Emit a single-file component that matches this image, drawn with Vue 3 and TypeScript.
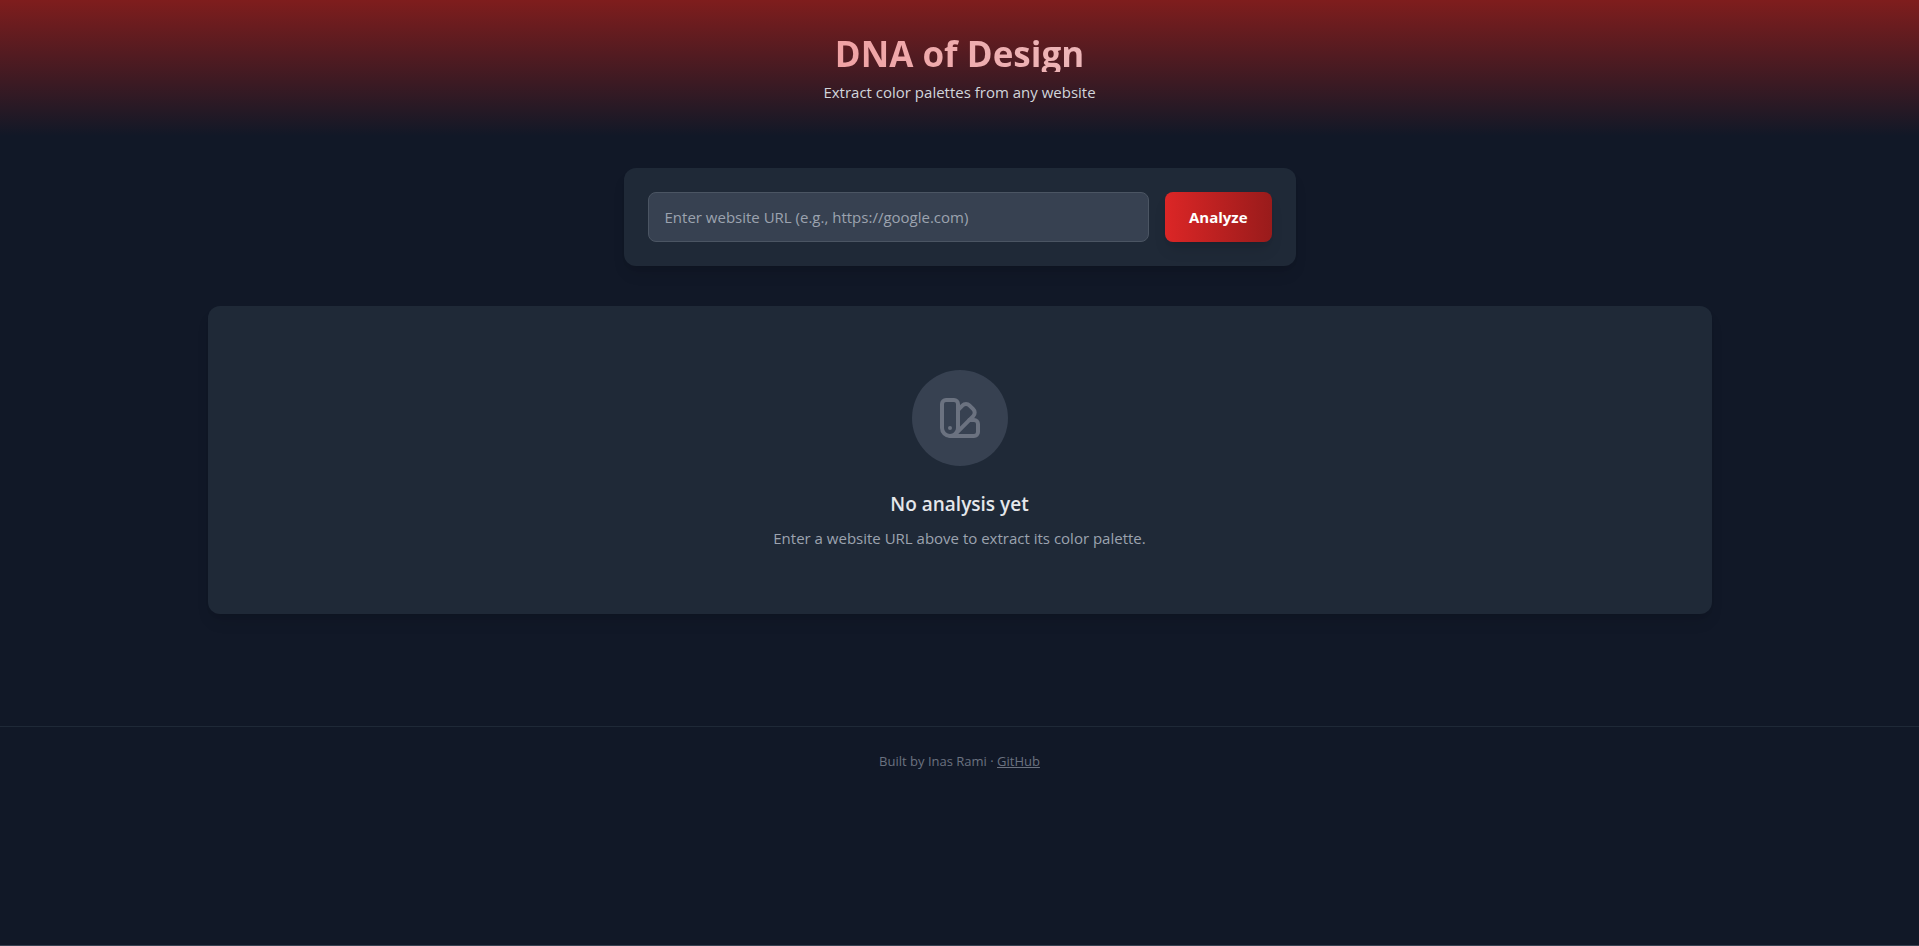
<script setup lang="ts">
import { ref } from 'vue'

const url = ref('')
</script>

<template>
  <div class="page">
    <header class="hero">
      <div class="container">
        <h1>DNA of Design</h1>
        <p>Extract color palettes from any website</p>
      </div>
    </header>

    <main class="container content">
      <form class="card search" @submit.prevent>
        <input v-model="url" type="text" aria-label="Website URL" placeholder="Enter website URL (e.g., https://google.com)" />
        <button type="submit">Analyze</button>
      </form>

      <section class="card empty">
        <div class="badge">
          <svg viewBox="0 0 24 24" aria-hidden="true">
            <path d="M11 17a4 4 0 0 1-8 0V5a2 2 0 0 1 2-2h4a2 2 0 0 1 2 2Z" />
            <path d="M16.7 13H19a2 2 0 0 1 2 2v4a2 2 0 0 1-2 2H7" />
            <path d="M7 17h.01" />
            <path d="m11 8 2.3-2.3a2.4 2.4 0 0 1 3.404.004L18.6 7.6a2.4 2.4 0 0 1 .026 3.434L9.9 19.8" />
          </svg>
        </div>
        <h2>No analysis yet</h2>
        <p>Enter a website URL above to extract its color palette.</p>
      </section>
    </main>

    <footer>Built by Inas Rami · <a href="#">GitHub</a></footer>
  </div>
</template>

<style>
body {
  margin: 0;
  background: #111827;
}
</style>

<style scoped>
* {
  box-sizing: border-box;
}
.page {
  min-height: 100vh;
  background: #111827;
  border-bottom: 1px solid #374151;
  color: #f3f4f6;
  font-family: "Segoe UI", "Open Sans", "Noto Sans", sans-serif;
  font-size: 15px;
  line-height: 24px;
}
h1,
h2,
p {
  margin: 0;
}
.container {
  max-width: 1536px;
  margin: 0 auto;
  padding: 0 16px;
}
.hero {
  padding: 32px 0;
  background: linear-gradient(to bottom, #7f1d1d, #111827);
  text-align: center;
}
h1 {
  margin-bottom: 8px;
  padding-top: 4px;
  background: linear-gradient(to right, #f87171, #e5e7eb);
  -webkit-background-clip: text;
  background-clip: text;
  color: transparent;
  font-size: 35px;
  font-weight: 700;
  line-height: 36px;
}
.hero p {
  color: #d1d5db;
}
.content {
  padding-top: 32px;
  padding-bottom: 32px;
}
.card {
  border-radius: 12px;
  background: #1f2937;
  box-shadow: 0 10px 15px -3px rgba(0, 0, 0, 0.1), 0 4px 6px -4px rgba(0, 0, 0, 0.1);
}
.search {
  display: flex;
  gap: 16px;
  max-width: 672px;
  margin: 0 auto 40px;
  padding: 24px;
}
input {
  flex: 1;
  min-width: 0;
  padding: 12px 16px;
  border: 1px solid #4b5563;
  border-radius: 8px;
  background: #374151;
  color: #f3f4f6;
  font: inherit;
}
input::placeholder {
  color: #9ca3af;
  opacity: 1;
}
button {
  padding: 12px 24px;
  border: 0;
  border-radius: 8px;
  background: linear-gradient(to right, #dc2626, #991b1b);
  box-shadow: 0 10px 15px -3px rgba(0, 0, 0, 0.1), 0 4px 6px -4px rgba(0, 0, 0, 0.1);
  color: #fff;
  font: inherit;
  font-weight: 700;
  cursor: pointer;
}
.empty {
  display: flex;
  flex-direction: column;
  align-items: center;
  padding: 64px 32px;
  text-align: center;
}
.badge {
  display: grid;
  place-items: center;
  width: 96px;
  height: 96px;
  margin-bottom: 24px;
  border-radius: 50%;
  background: #374151;
}
.badge svg {
  width: 48px;
  height: 48px;
  fill: none;
  stroke: #6b7280;
  stroke-width: 2;
  stroke-linecap: round;
  stroke-linejoin: round;
}
h2 {
  margin-bottom: 8px;
  color: #e5e7eb;
  font-size: 19px;
  font-weight: 600;
  line-height: 28px;
}
.empty p {
  color: #9ca3af;
}
footer {
  margin-top: 80px;
  padding: 24px 16px;
  border-top: 1px solid #1f2937;
  color: #6b7280;
  font-size: 13px;
  line-height: 20px;
  text-align: center;
}
footer a {
  color: inherit;
}
</style>
